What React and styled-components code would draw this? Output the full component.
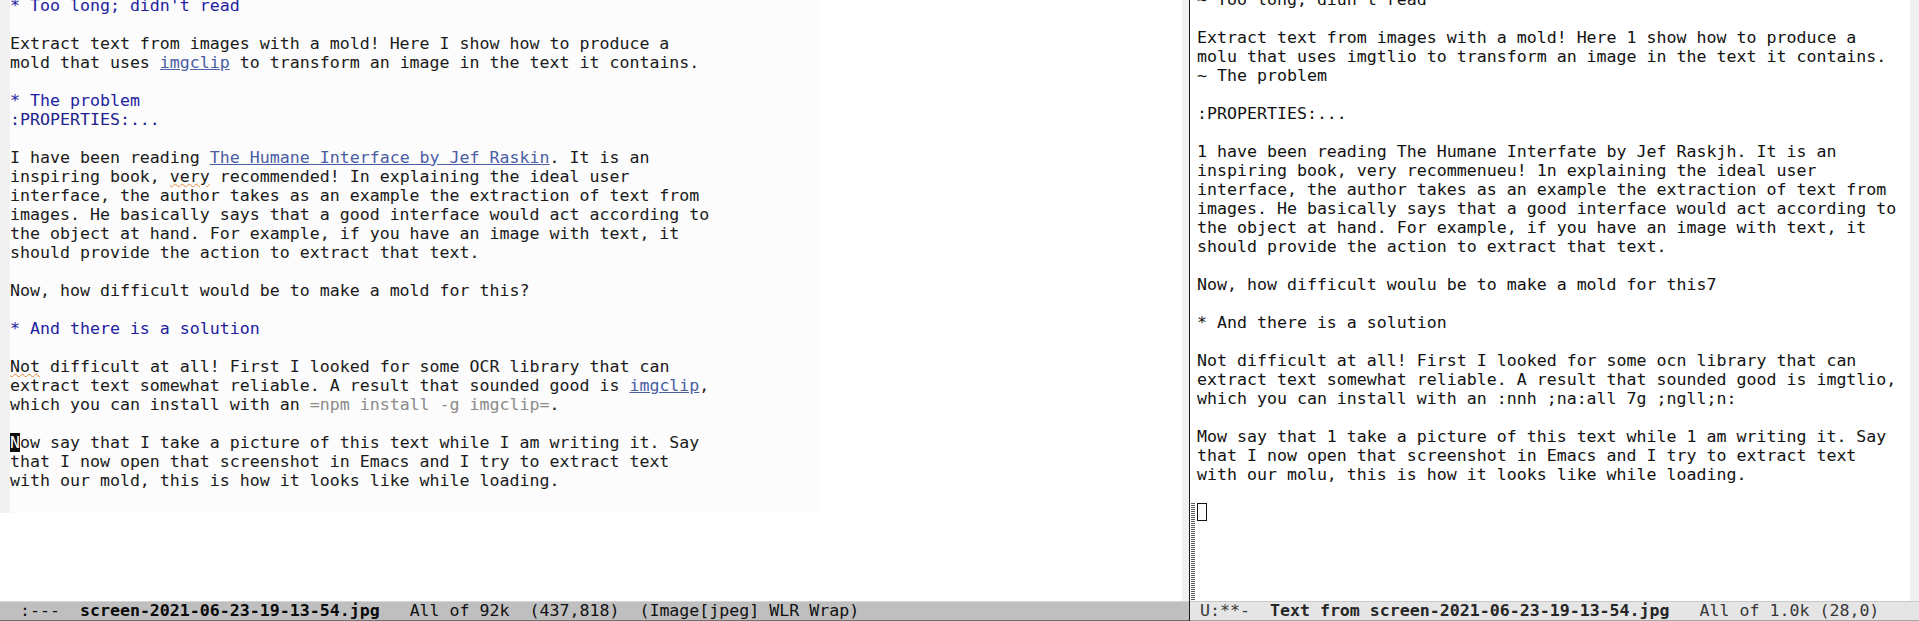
import React from "react";
import styled, { createGlobalStyle } from "styled-components";

const MONO = `"DejaVu Sans Mono", "Liberation Mono", monospace`;

const GlobalStyle = createGlobalStyle`
  html, body {
    margin: 0;
    padding: 0;
    background: #ffffff;
    overflow: hidden;
  }
  #root {
    width: 1919px;
    height: 621px;
  }
`;

const Frame = styled.div`
  display: flex;
  width: 1919px;
  height: 621px;
  font-family: ${MONO};
  font-size: 16.6px;
  line-height: 19px;
  color: #161616;
  background: #ffffff;
  overflow: hidden;
`;

const Window = styled.div`
  display: flex;
  flex-direction: column;
  width: ${(p) => (p.$width ? `${p.$width}px` : "auto")};
  flex: ${(p) => (p.$width ? "0 0 auto" : "1 1 0")};
  min-width: 0;
`;

const Divider = styled.div`
  width: 1px;
  flex-shrink: 0;
  background: #1b1b1b;
`;

const WindowBody = styled.div`
  flex: 1;
  display: flex;
  min-height: 0;
  overflow: hidden;
`;

const Fringe = styled.div`
  width: ${(p) => p.$w}px;
  flex-shrink: 0;
  background: ${(p) => p.$bg};
`;

const ImagePane = styled.div`
  flex: 1;
  min-width: 0;
  display: flex;
  flex-direction: column;
`;

const Screenshot = styled.div`
  width: 821px;
  height: 513px;
  flex-shrink: 0;
  display: flex;
  overflow: hidden;
`;

const ShotFringe = styled.div`
  width: 10px;
  flex-shrink: 0;
  background: #f1f1f1;
`;

const ShotText = styled.div`
  flex: 1;
  background: #fcfcfc;
  overflow: hidden;
  color: #1a1a1a;
`;

const TextBlock = styled.div`
  margin-top: ${(p) => p.$offset}px;
  padding-left: ${(p) => p.$indent || 0}px;
`;

const Line = styled.div`
  height: 19px;
  white-space: pre;
`;

const EmptyLines = styled.div`
  width: ${(p) => p.$w}px;
  margin: ${(p) => p.$top}px 0 1px ${(p) => p.$left}px;
  flex-shrink: 0;
  background: repeating-linear-gradient(
    to bottom,
    #5a5a5a 0px,
    #5a5a5a 1px,
    transparent 1px,
    transparent 2px
  );
`;

const Heading = styled.span`
  color: #2222a0;
`;

const Drawer = styled.span`
  color: #23238f;
`;

const Link = styled.span`
  color: #4a5ea4;
  text-decoration: underline;
  text-decoration-color: #4a5ea4;
`;

const Verbatim = styled.span`
  color: #8b8b8b;
`;

const Misspelled = styled.span`
  text-decoration-line: underline;
  text-decoration-style: wavy;
  text-decoration-color: #e38a3c;
  text-decoration-thickness: 1px;
  text-underline-offset: 1px;
`;

const CursorChar = styled.span`
  background: #0d0d0d;
  color: #ffffff;
`;

const BufferPane = styled.div`
  flex: 1;
  min-width: 0;
  display: flex;
  flex-direction: column;
  margin-top: -10.5px;
  color: #121212;
`;

const EobArea = styled.div`
  flex: 1;
  display: flex;
  align-items: stretch;
`;

const HollowCursor = styled.div`
  box-sizing: border-box;
  width: 10px;
  height: 18px;
  margin-left: 2px;
  border: 1px solid #111111;
  flex-shrink: 0;
`;

const ModeLine = styled.div`
  box-sizing: border-box;
  height: 20px;
  flex-shrink: 0;
  white-space: pre;
  line-height: 18px;
  overflow: hidden;
  background: ${(p) => (p.$active ? "#bfbfbf" : "#e5e5e5")};
  color: ${(p) => (p.$active ? "#111111" : "#383838")};
  border-top: 1px solid ${(p) => (p.$active ? "#d6d6d6" : "#c9c9c9")};
  border-bottom: 1px solid ${(p) => (p.$active ? "#6f6f6f" : "#a8a8a8")};
`;

const BufferName = styled.span`
  font-weight: bold;
  color: ${(p) => (p.$active ? "#0a0a0a" : "#262626")};
`;

const leftLines = [
  [{ t: "* Too long; didn't read", k: "h" }],
  [],
  ["Extract text from images with a mold! Here I show how to produce a"],
  ["mold that uses ", { t: "imgclip", k: "link" }, " to transform an image in the text it contains."],
  [],
  [{ t: "* The problem", k: "h" }],
  [{ t: ":PROPERTIES:...", k: "drawer" }],
  [],
  ["I have been reading ", { t: "The Humane Interface by Jef Raskin", k: "link" }, ". It is an"],
  ["inspiring book, ", { t: "very", k: "spell" }, " recommended! In explaining the ideal user"],
  ["interface, the author takes as an example the extraction of text from"],
  ["images. He basically says that a good interface would act according to"],
  ["the object at hand. For example, if you have an image with text, it"],
  ["should provide the action to extract that text."],
  [],
  ["Now, how difficult would be to make a mold for this?"],
  [],
  [{ t: "* And there is a solution", k: "h" }],
  [],
  [{ t: "Not", k: "spell" }, " difficult at all! First I looked for some OCR library that can"],
  ["extract text somewhat reliable. A result that sounded good is ", { t: "imgclip", k: "link" }, ","],
  ["which you can install with an ", { t: "=npm install -g imgclip=", k: "verb" }, "."],
  [],
  [{ t: "N", k: "cursor" }, "ow say that I take a picture of this text while I am writing it. Say"],
  ["that I now open that screenshot in Emacs and I try to extract text"],
  ["with our mold, this is how it looks like while loading."],
];

const rightLines = [
  "~ Too long, diun't read",
  "",
  "Extract text from images with a mold! Here 1 show how to produce a",
  "molu that uses imgtlio to transform an image in the text it contains.",
  "~ The problem",
  "",
  ":PROPERTIES:...",
  "",
  "1 have been reading The Humane Interfate by Jef Raskjh. It is an",
  "inspiring book, very recommenueu! 1n explaining the ideal user",
  "interface, the author takes as an example the extraction of text from",
  "images. He basically says that a good interface would act according to",
  "the object at hand. For example, if you have an image with text, it",
  "should provide the action to extract that text.",
  "",
  "Now, how difficult woulu be to make a mold for this7",
  "",
  "* And there is a solution",
  "",
  "Not difficult at all! First I looked for some ocn library that can",
  "extract text somewhat reliable. A result that sounded good is imgtlio,",
  "which you can install with an :nnh ;na:all 7g ;ngll;n:",
  "",
  "Mow say that 1 take a picture of this text while 1 am writing it. Say",
  "that I now open that screenshot in Emacs and I try to extract text",
  "with our molu, this is how it looks like while loading.",
  "",
];

function Segment({ seg }) {
  if (typeof seg === "string") return seg;
  switch (seg.k) {
    case "h":
      return <Heading>{seg.t}</Heading>;
    case "drawer":
      return <Drawer>{seg.t}</Drawer>;
    case "link":
      return <Link>{seg.t}</Link>;
    case "verb":
      return <Verbatim>{seg.t}</Verbatim>;
    case "spell":
      return <Misspelled>{seg.t}</Misspelled>;
    case "cursor":
      return <CursorChar>{seg.t}</CursorChar>;
    default:
      return seg.t;
  }
}

function ImageWindow() {
  return (
    <Window $width={1189}>
      <WindowBody>
        <ImagePane>
          <Screenshot>
            <ShotFringe />
            <ShotText>
              <TextBlock $offset={-4}>
                {leftLines.map((segs, i) => (
                  <Line key={i}>
                    {segs.map((s, j) => (
                      <Segment key={j} seg={s} />
                    ))}
                  </Line>
                ))}
              </TextBlock>
            </ShotText>
          </Screenshot>
          <EmptyLines $w={5} $top={2} $left={0} />
        </ImagePane>
        <Fringe $w={7} $bg="#f0f0f0" />
      </WindowBody>
      <ModeLine $active>
        {"  :---  "}
        <BufferName $active>screen-2021-06-23-19-13-54.jpg</BufferName>
        {"   All of 92k  (437,818)  (Image[jpeg] WLR Wrap)"}
      </ModeLine>
    </Window>
  );
}

function TextWindow() {
  return (
    <Window>
      <WindowBody>
        <BufferPane>
          <TextBlock $offset={0} $indent={7}>
            {rightLines.map((l, i) => (
              <Line key={i}>{l}</Line>
            ))}
          </TextBlock>
          <EobArea>
            <EmptyLines $w={4} $top={0} $left={1} />
            <HollowCursor />
          </EobArea>
        </BufferPane>
        <Fringe $w={9} $bg="#f0f0f0" />
      </WindowBody>
      <ModeLine>
        {" U:**-  "}
        <BufferName>Text from screen-2021-06-23-19-13-54.jpg</BufferName>
        {"   All of 1.0k (28,0)"}
      </ModeLine>
    </Window>
  );
}

export default function App() {
  return (
    <>
      <GlobalStyle />
      <Frame>
        <ImageWindow />
        <Divider />
        <TextWindow />
      </Frame>
    </>
  );
}
